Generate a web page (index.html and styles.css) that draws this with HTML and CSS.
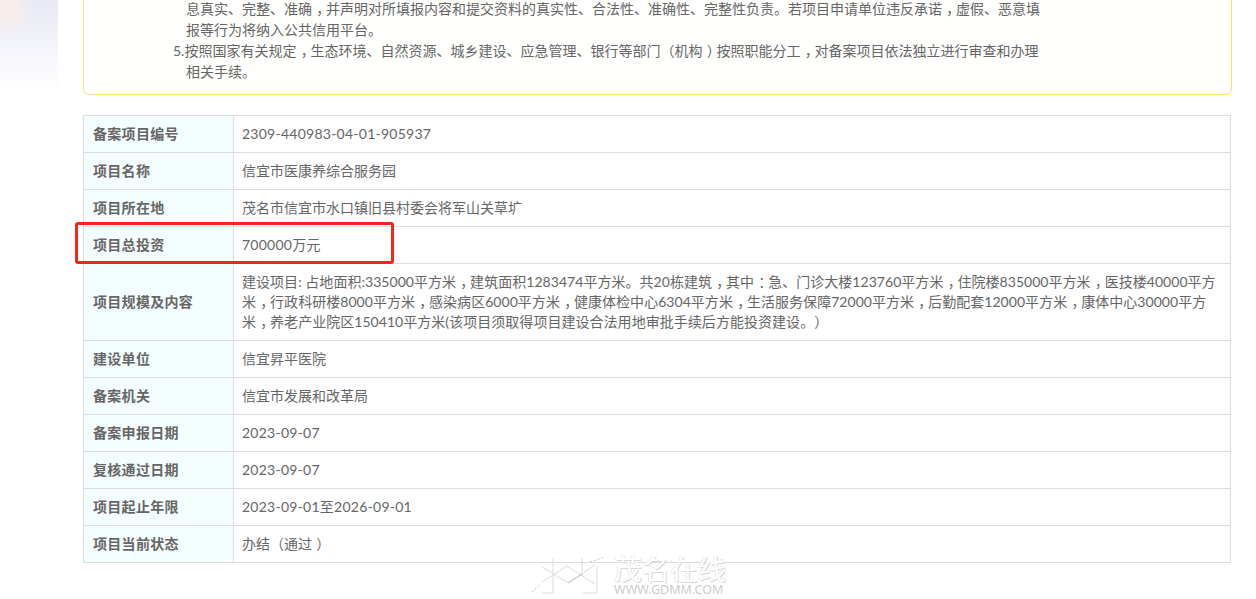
FILE: index.html
```html
<!DOCTYPE html>
<html lang="zh-CN">
<head>
<meta charset="utf-8">
<title>项目备案信息</title>
<link rel="stylesheet" href="styles.css">
</head>
<body>
<div class="side-glow"></div>
<main class="page">
  <section class="notice">
    <p class="line cont">息真实、完整、准确<span class="pc">，</span>并声明对所填报内容和提交资料的真实性、合法性、准确性、完整性负责。若项目申请单位违反承诺<span class="pc">，</span>虚假、恶意填</p>
    <p class="line cont">报等行为将纳入公共信用平台。</p>
    <p class="line">5.按照国家有关规定<span class="pc">，</span>生态环境、自然资源、城乡建设、应急管理、银行等部门（机构<span class="pc">）</span>按照职能分工<span class="pc">，</span>对备案项目依法独立进行审查和办理</p>
    <p class="line cont">相关手续。</p>
  </section>
  <div class="table-wrap">
    <table class="info">
      <tr><th>备案项目编号</th><td class="num">2309-440983-04-01-905937</td></tr>
      <tr><th>项目名称</th><td>信宜市医康养综合服务园</td></tr>
      <tr><th>项目所在地</th><td>茂名市信宜市水口镇旧县村委会将军山关草圹</td></tr>
      <tr><th>项目总投资</th><td class="num">700000万元</td></tr>
      <tr class="tall"><th>项目规模及内容</th><td>
        <div class="ln">建设项目: 占地面积:335000平方米<span class="pc">，</span>建筑面积1283474平方米。共20栋建筑<span class="pc">，</span>其中<span class="pc">：</span>急、门诊大楼123760平方米<span class="pc">，</span>住院楼835000平方米<span class="pc">，</span>医技楼40000平方</div>
        <div class="ln">米<span class="pc">，</span>行政科研楼8000平方米<span class="pc">，</span>感染病区6000平方米<span class="pc">，</span>健康体检中心6304平方米<span class="pc">，</span>生活服务保障72000平方米<span class="pc">，</span>后勤配套12000平方米<span class="pc">，</span>康体中心30000平方</div>
        <div class="ln">米<span class="pc">，</span>养老产业院区150410平方米(该项目须取得项目建设合法用地审批手续后方能投资建设。）</div>
      </td></tr>
      <tr><th>建设单位</th><td>信宜昇平医院</td></tr>
      <tr><th>备案机关</th><td>信宜市发展和改革局</td></tr>
      <tr><th>备案申报日期</th><td class="num">2023-09-07</td></tr>
      <tr><th>复核通过日期</th><td class="num">2023-09-07</td></tr>
      <tr><th>项目起止年限</th><td class="num">2023-09-01至2026-09-01</td></tr>
      <tr><th>项目当前状态</th><td>办结（通过<span class="pc">）</span></td></tr>
    </table>
    <div class="highlight"></div>
  </div>
</main>
<div class="watermark">
  <svg class="wm-logo" width="76" height="42" viewBox="0 0 76 42" aria-hidden="true">
    <g fill="none" stroke="#dadada" stroke-width="1">
      <path d="M23 3v35H12M67 12v26H53M52 3v18M12 12l26 16 27-18M12 27l25-16 28 18"/>
      <path d="M38 28l14-9" stroke="#bdbdbd"/>
      <path d="M2 37l8-7M60 7l15-5" stroke-dasharray="2 2" stroke="#c4c4c4"/>
    </g>
  </svg>
  <div class="wm-text">
    <span class="wm-name">茂名在线</span>
    <span class="wm-url">WWW.GDMM.COM</span>
  </div>
</div>
</body>
</html>
```
FILE: styles.css
```css
html, body {
  margin: 0;
  padding: 0;
  height: 599px;
  overflow: hidden;
  background: #fff;
}
body {
  position: relative;
  font-family: "Lato", "Noto Sans CJK SC", sans-serif;
  font-size: 14px;
  color: #666;
  text-spacing-trim: space-all;
}
.pc {
  padding-left: 0.3em;
  letter-spacing: -0.3em;
}
.side-glow {
  position: absolute;
  left: 0;
  top: 0;
  width: 58px;
  height: 92px;
  background:
    radial-gradient(circle at 8px 8px, #fdeee6 0, rgba(253, 238, 230, 0) 26px),
    linear-gradient(180deg, #e8e8f4 0%, #f4f4fb 50%, #ffffff 100%);
}
.page {
  width: 1148px;
  margin-left: 83px;
}
.notice {
  box-sizing: border-box;
  width: 1149px;
  margin-top: -60px;
  padding: 57px 0 12px 89px;
  border: 1px solid #ffdf70;
  border-radius: 6px;
  background: #fffffd;
  line-height: 21px;
}
.line {
  margin: 0;
  width: 880px;
}
.line.cont {
  padding-left: 13px;
  box-sizing: border-box;
}
.table-wrap {
  position: relative;
  margin-top: 20px;
}
.info {
  width: 1148px;
  table-layout: fixed;
  border-collapse: collapse;
}
.info th,
.info td {
  height: 37px;
  border: 1px solid #ddd;
  box-sizing: border-box;
  line-height: 20px;
  vertical-align: middle;
}
.info th {
  width: 150px;
  padding: 0 9px;
  background: #f5fefe;
  font-weight: 700;
  text-align: left;
  letter-spacing: 0.3px;
}
.info td {
  padding: 0 9px 0 8px;
}
.info td.num {
  letter-spacing: 0.25px;
}
.ln {
  white-space: nowrap;
  letter-spacing: 0.04px;
}
.info .tall th,
.info .tall td {
  height: 77px;
}
.highlight {
  position: absolute;
  left: -8px;
  top: 107px;
  width: 319px;
  height: 42px;
  box-sizing: border-box;
  border: 3px solid #f5251b;
  border-radius: 3px;
}
.watermark {
  position: absolute;
  left: 530px;
  top: 555px;
  display: flex;
  gap: 8px;
  width: 198px;
  height: 42px;
}
.wm-logo {
  flex: none;
}
.wm-text {
  display: flex;
  flex-direction: column;
  gap: 2px;
  color: #fff;
  text-shadow: 1px 1px 0 #d8d8d8, -1px 0 0 #e8e8e8;
}
.wm-name {
  font-family: "Noto Sans CJK SC", sans-serif;
  font-size: 28px;
  line-height: 26px;
  white-space: nowrap;
}
.wm-url {
  font-family: "Noto Sans", sans-serif;
  font-size: 12.5px;
  line-height: 14px;
  color: #cdcdcd;
  text-shadow: none;
  white-space: nowrap;
}
```
